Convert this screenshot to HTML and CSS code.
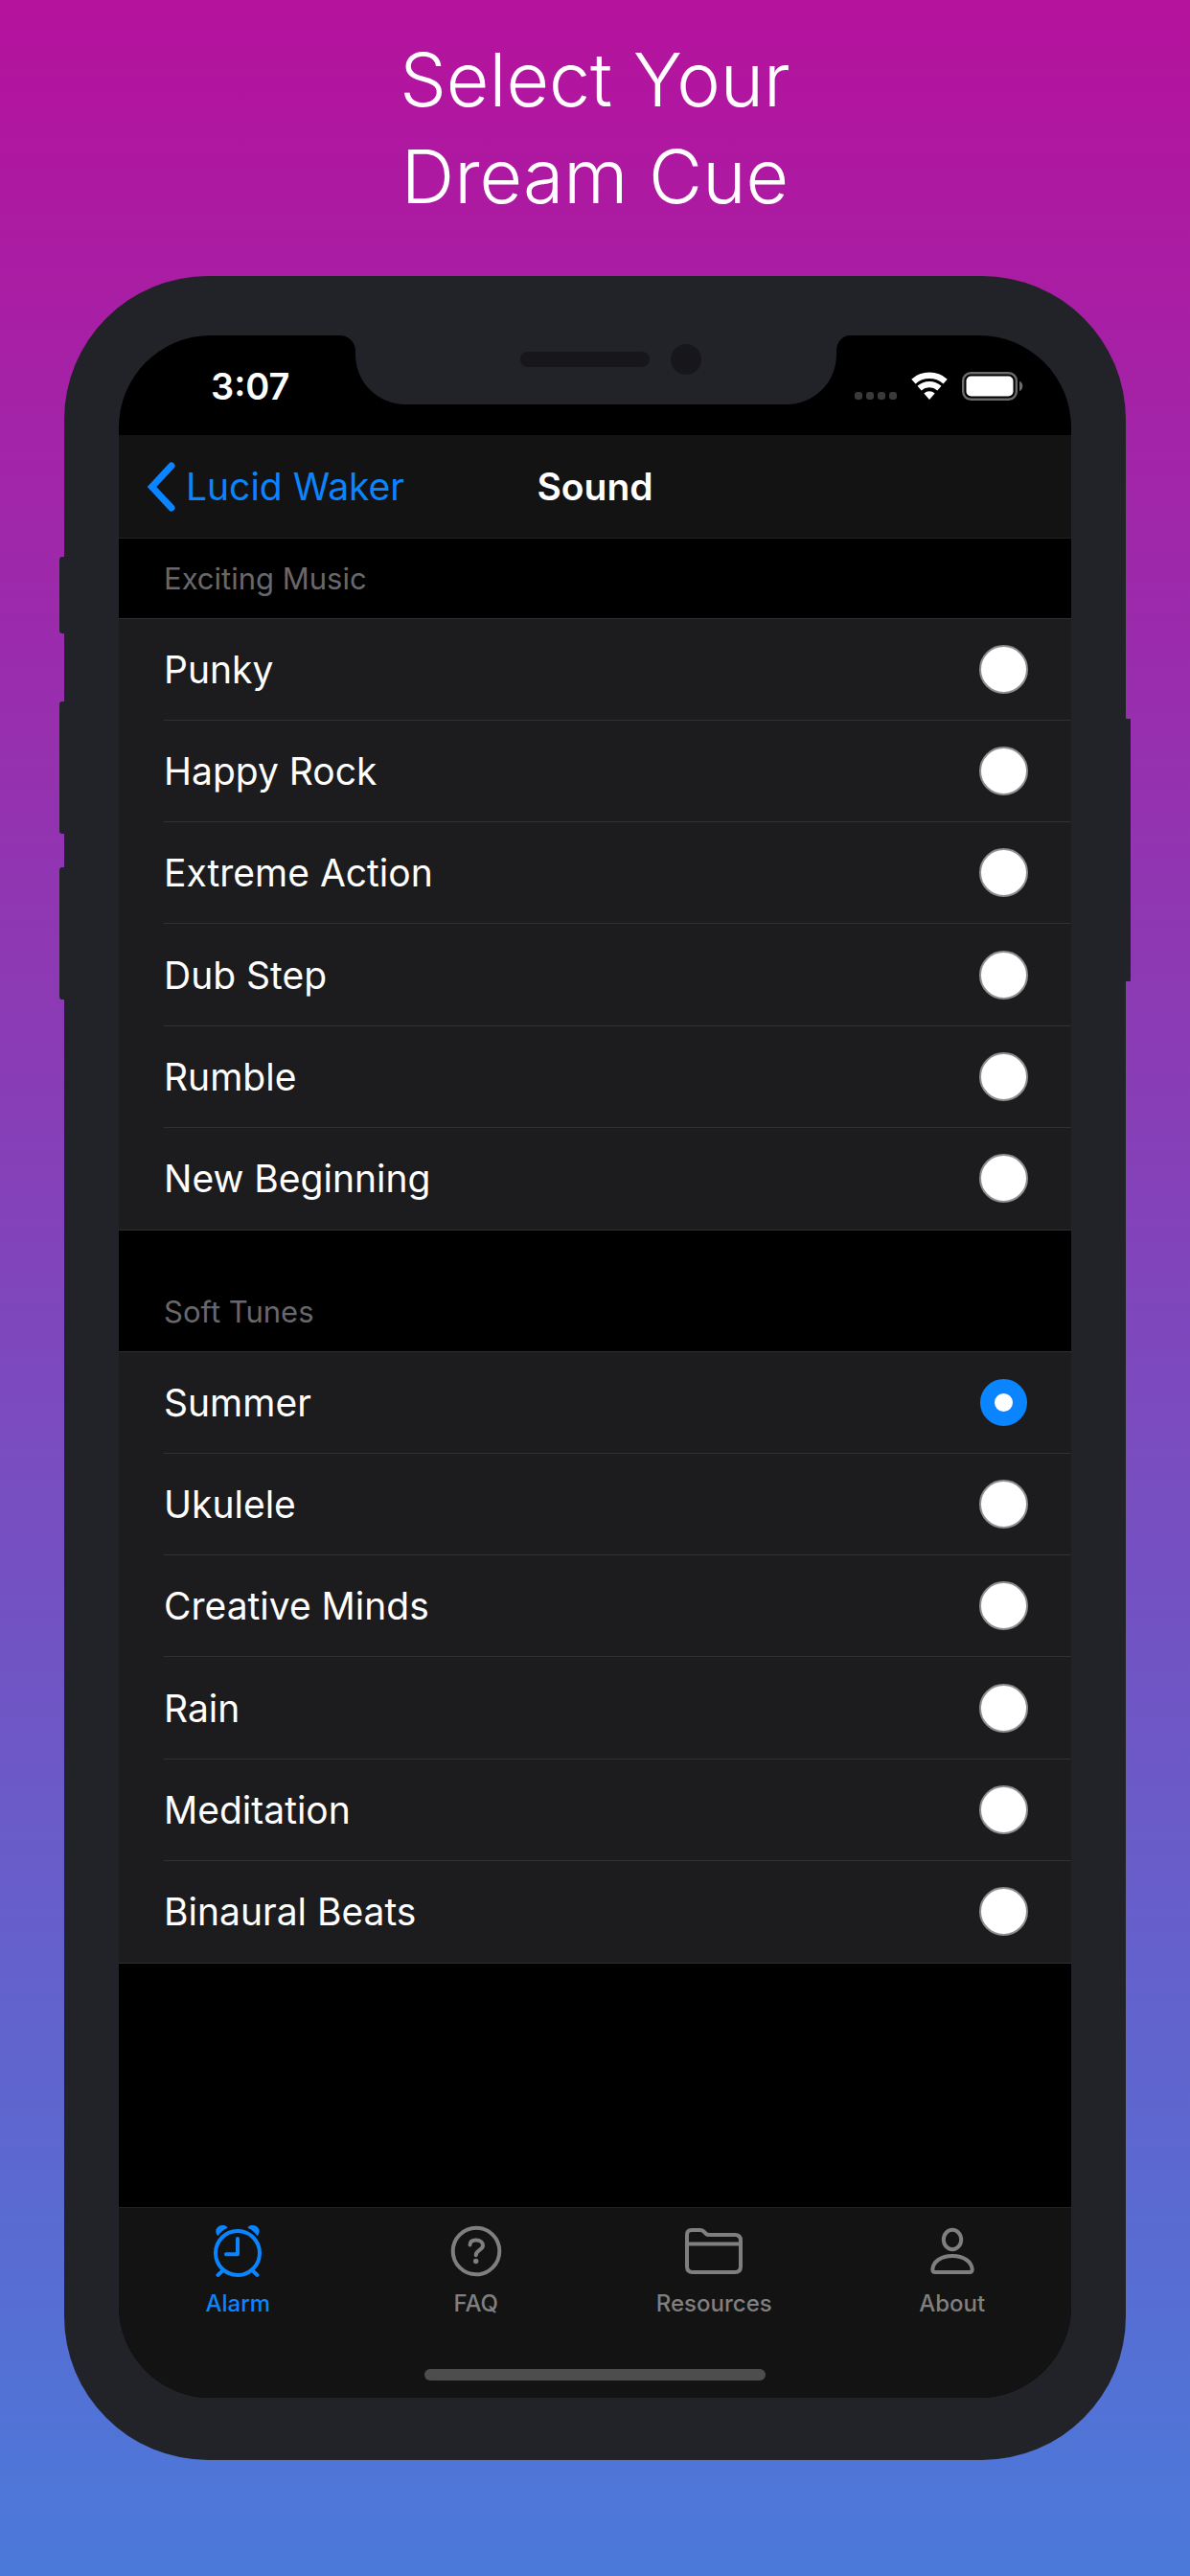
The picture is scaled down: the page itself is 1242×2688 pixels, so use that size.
FILE: index.html
```html
<!DOCTYPE html>
<html lang="en">
<head>
<meta charset="utf-8">
<meta name="viewport" content="width=device-width, initial-scale=1">
<title>Lucid Waker – Select Your Dream Cue</title>
<link rel="stylesheet" href="styles.css">
</head>
<body>
<h1 class="headline">Select Your<br>Dream Cue</h1>

<div class="phone">
  <span class="side-button side-button--mute"></span>
  <span class="side-button side-button--up"></span>
  <span class="side-button side-button--down"></span>
  <span class="side-button side-button--power"></span>

  <div class="screen">
    <svg class="notch" width="532" height="72" viewBox="0 0 532 72" aria-hidden="true">
      <path fill="#222328" d="M0 0A16 16 0 0 1 16 16V20A52 52 0 0 0 68 72H466A52 52 0 0 0 518 20V16A14 16 0 0 1 532 0Z"/>
      <rect x="188" y="17" width="135" height="16" rx="8" fill="#17161b"/>
      <circle cx="361" cy="25" r="16" fill="#17161b"/>
    </svg>

    <div class="status">
      <time class="status__time">3:07</time>
      <div class="status__icons">
        <svg width="44" height="30" viewBox="0 0 44 30" fill="#3a3a3a" aria-hidden="true">
          <rect x="0" y="21" width="8" height="8" rx="3"/><rect x="12" y="21" width="8" height="8" rx="3"/><rect x="24" y="21" width="8" height="8" rx="3"/><rect x="36" y="21" width="8" height="8" rx="3"/>
        </svg>
        <svg width="38" height="30" viewBox="0 0 38 30" fill="none" stroke="#fff" aria-hidden="true">
          <path stroke-width="6.5" d="M2.4 10.1A25.2 25.2 0 0 1 35.6 10.1"/>
          <path stroke-width="6.3" d="M8.6 17.1A15.8 15.8 0 0 1 29.4 17.1"/>
          <path stroke="none" fill="#fff" d="M19 29L13.3 22.5A8.6 8.6 0 0 1 24.7 22.5Z"/>
        </svg>
        <svg width="64" height="30" viewBox="0 0 64 30" aria-hidden="true">
          <rect x="1.2" y="1.2" width="55.6" height="27.6" rx="8" fill="none" stroke="#6c6c6c" stroke-width="2.4"/>
          <rect x="4.5" y="4.5" width="49" height="21" rx="5" fill="#fff"/>
          <path fill="#6c6c6c" d="M60 9.8C64.4 11.5 64.4 18.500 60 20.200Z"/>
        </svg>
      </div>
    </div>

    <nav class="navbar">
      <a class="navbar__back" href="#alarm">
        <svg width="32" height="52" viewBox="0 0 32 52" fill="none" stroke="currentColor" stroke-width="7" stroke-linecap="round" stroke-linejoin="miter" aria-hidden="true"><path d="M27 4L6.500 26L27 48"/></svg>
        <span>Lucid Waker</span>
      </a>
      <h2 class="navbar__title">Sound</h2>
    </nav>

    <main class="content">
      <section>
        <h3 class="group-title">Exciting Music</h3>
        <ul class="list">
          <li><label class="row"><span>Punky</span><input class="radio" type="radio" name="sound"></label></li>
          <li><label class="row"><span>Happy Rock</span><input class="radio" type="radio" name="sound"></label></li>
          <li><label class="row"><span>Extreme Action</span><input class="radio" type="radio" name="sound"></label></li>
          <li><label class="row"><span>Dub Step</span><input class="radio" type="radio" name="sound"></label></li>
          <li><label class="row"><span>Rumble</span><input class="radio" type="radio" name="sound"></label></li>
          <li><label class="row"><span>New Beginning</span><input class="radio" type="radio" name="sound"></label></li>
        </ul>
      </section>
      <section>
        <h3 class="group-title">Soft Tunes</h3>
        <ul class="list">
          <li><label class="row"><span>Summer</span><input class="radio" type="radio" name="sound" checked></label></li>
          <li><label class="row"><span>Ukulele</span><input class="radio" type="radio" name="sound"></label></li>
          <li><label class="row"><span>Creative Minds</span><input class="radio" type="radio" name="sound"></label></li>
          <li><label class="row"><span>Rain</span><input class="radio" type="radio" name="sound"></label></li>
          <li><label class="row"><span>Meditation</span><input class="radio" type="radio" name="sound"></label></li>
          <li><label class="row"><span>Binaural Beats</span><input class="radio" type="radio" name="sound"></label></li>
        </ul>
      </section>
    </main>

    <footer class="tabbar">
      <nav class="tabs">
        <a class="tab tab--active" href="#alarm">
          <svg class="tab__icon" viewBox="0 0 60 60" aria-hidden="true">
            <circle cx="30" cy="32" r="23"/>
            <path d="M30 17V33.200H18M14.300 50.500L9.500 55M45.700 50.500L50.500 55"/>
            <path class="solid" d="M8.800 13.600C5 8 9 3 14.500 3C16.500 3 18 3.700 19 4.600C19.600 5.200 19.300 5.900 18.600 6.200C15 7.800 12.500 10 10.300 13.100C9.900 13.800 9.300 14.200 8.800 13.600Z"/>
            <path class="solid" d="M51.200 13.600C55 8 51 3 45.500 3C43.500 3 42 3.700 41 4.600C40.400 5.200 40.700 5.900 41.400 6.200C45 7.800 47.500 10 49.700 13.100C50.100 13.800 50.700 14.200 51.200 13.600Z"/>
          </svg>
          <span>Alarm</span>
        </a>
        <a class="tab" href="#faq">
          <svg class="tab__icon" viewBox="0 0 60 60" aria-hidden="true">
            <circle cx="30" cy="30" r="24.300"/>
            <path d="M23.500 23.500C23.500 20 26.200 18.500 29.800 18.500C34 18.500 37 20.800 37 24C37 29 29.700 29 29.700 34.300"/>
            <circle class="solid" cx="29.700" cy="40.500" r="2.700"/>
          </svg>
          <span>FAQ</span>
        </a>
        <a class="tab" href="#resources">
          <svg class="tab__icon" viewBox="0 0 60 60" aria-hidden="true">
            <path d="M2 13Q2 8 7 8H15.500Q18 8 19.500 9.500L22 12Q23 13 25 13H52Q58 13 58 19V46Q58 52 52 52H8Q2 52 2 46ZM2 22.500H58"/>
          </svg>
          <span>Resources</span>
        </a>
        <a class="tab" href="#about">
          <svg class="tab__icon" viewBox="0 0 60 60" aria-hidden="true">
            <ellipse cx="30" cy="18" rx="9.200" ry="10.200"/>
            <path d="M9.300 49C10 41 18 35 30 35S50 41 50.700 49Q50.700 52 48 52H12Q9.300 52 9.300 49Z"/>
          </svg>
          <span>About</span>
        </a>
      </nav>
      <div class="home-indicator"></div>
    </footer>
  </div>
</div>
</body>
</html>
```
FILE: styles.css
```css
:root {
  --blue: #0a84ff;
  --case: #222328;
  --bar: #131313;
  --cell: #1c1c1e;
  --line: #303032;
}

* {
  box-sizing: border-box;
}

html {
  min-height: 100%;
  background: linear-gradient(#b5129d, #4b79da);
}

body {
  margin: 0;
  padding-bottom: 121px;
  color: #fff;
  font-family: Inter, "Liberation Sans", sans-serif;
}

h1,
h2,
h3,
ul {
  margin: 0;
  padding: 0;
}

a {
  color: inherit;
  text-decoration: none;
}

svg {
  display: block;
}

.headline {
  padding: 33px 0 53px;
  font-size: 77px;
  font-weight: 300;
  line-height: 101px;
  text-align: center;
}

/* Phone case */

.phone {
  position: relative;
  margin: 0 67px;
  padding: 62px 57px 65px;
  border-radius: 150px;
  background: var(--case);
}

.side-button {
  position: absolute;
  left: -5px;
  width: 10px;
  border-radius: 3px;
  background: var(--case);
}

.side-button--mute {
  top: 293px;
  height: 80px;
}

.side-button--up {
  top: 444px;
  height: 138px;
}

.side-button--down {
  top: 617px;
  height: 138px;
}

.side-button--power {
  top: 462px;
  right: -5px;
  left: auto;
  height: 274px;
  border-radius: 1px;
}

.screen {
  position: relative;
  overflow: hidden;
  border-radius: 96px;
  background: #000;
}

.notch {
  position: absolute;
  top: 0;
  right: 0;
  left: 0;
  margin: 0 auto;
}

/* Status bar */

.status {
  display: flex;
  align-items: center;
  justify-content: space-between;
  height: 104px;
  padding: 2px 50px 0 96px;
}

.status__time {
  font-size: 38px;
  font-weight: 600;
}

.status__icons {
  display: flex;
  gap: 15px;
}

/* Navigation bar */

.navbar {
  display: grid;
  grid-template-columns: 1fr auto 1fr;
  align-items: center;
  height: 108px;
  padding: 0 28px;
  border-bottom: 1px solid #222;
  background: var(--bar);
  font-size: 39px;
}

.navbar__back {
  display: flex;
  align-items: center;
  gap: 10px;
  color: var(--blue);
}

.navbar__title {
  font-size: 39px;
  font-weight: 600;
}

/* Sound list */

.content {
  display: grid;
  gap: 43px;
  padding-bottom: 254px;
}

.group-title {
  padding-left: 47px;
  color: #68686c;
  font-size: 31px;
  font-weight: 400;
  line-height: 83px;
}

.list {
  display: grid;
  grid-auto-rows: 1fr;
  min-height: 639px;
  padding-left: 47px;
  border-top: 1px solid var(--line);
  border-bottom: 1px solid var(--line);
  background: var(--cell);
  list-style: none;
}

.list li {
  display: grid;
}

.list li:not(:last-child) {
  border-bottom: 1px solid var(--line);
}

.row {
  display: flex;
  align-items: center;
  justify-content: space-between;
  padding-right: 45px;
  font-size: 39px;
}

.radio {
  appearance: none;
  width: 51px;
  height: 51px;
  margin: 0;
  border: 2px solid #8e8e90;
  border-radius: 50%;
  background: #fff;
}

.radio:checked {
  width: 49px;
  height: 49px;
  margin-right: 1px;
  border: 15px solid var(--blue);
}

/* Tab bar */

.tabbar {
  padding: 15px 0 18px;
  border-top: 1px solid #222;
  background: var(--bar);
}

.tabs {
  display: grid;
  grid-template-columns: repeat(4, 1fr);
}

.tab {
  display: flex;
  flex-direction: column;
  align-items: center;
  gap: 10px;
  color: #7f7f7f;
  font-size: 24px;
  font-weight: 500;
  line-height: 30px;
}

.tab--active {
  color: var(--blue);
}

.tab__icon {
  width: 60px;
  height: 60px;
  fill: none;
  stroke: currentColor;
  stroke-width: 4;
  stroke-linecap: round;
  stroke-linejoin: round;
}

.tab__icon .solid {
  fill: currentColor;
  stroke: none;
}

.home-indicator {
  width: 356px;
  height: 12px;
  margin: 53px auto 0;
  border-radius: 6px;
  background: #4d4d4d;
}
```
